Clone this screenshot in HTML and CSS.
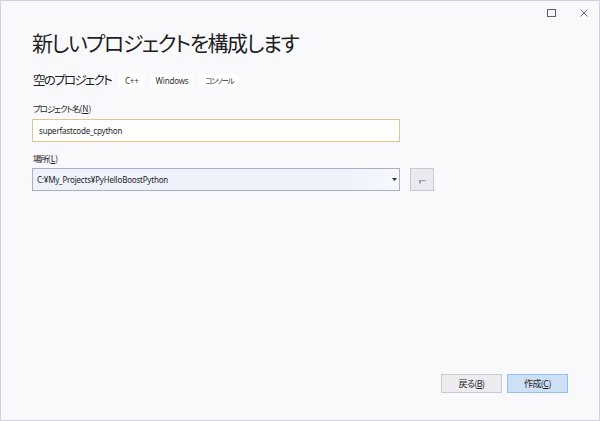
FILE: index.html
```html
<!DOCTYPE html>
<html lang="ja">
<head>
<meta charset="utf-8">
<title>新しいプロジェクトを構成します</title>
<link rel="stylesheet" href="styles.css">
</head>
<body>
<div class="window">
  <div class="titlebar">
    <span class="ctl max" aria-label="最大化"><svg width="9" height="8" viewBox="0 0 9 8"><rect x="0.5" y="0.5" width="8" height="7" fill="none" stroke="#5f5f6a" stroke-width="1"/></svg></span>
    <span class="ctl close" aria-label="閉じる"><svg width="8" height="8" viewBox="0 0 8 8"><path d="M0.5 0.5 L7.5 7.5 M7.5 0.5 L0.5 7.5" stroke="#6a6a75" stroke-width="1"/></svg></span>
  </div>
  <div class="content">
    <h1 class="title">新しいプロジェクトを構成します</h1>
    <div class="template">
      <span class="tname">空のプロジェクト</span>
      <span class="tag">C++</span>
      <span class="tag">Windows</span>
      <span class="tag jp">コンソール</span>
    </div>
    <label class="label first"><span class="jp">プロジェクト名</span>(<u>N</u>)</label>
    <div class="input name">superfastcode_cpython</div>
    <label class="label"><span class="jp">場所</span>(<u>L</u>)</label>
    <div class="locrow">
      <div class="input combo"><span class="ctext">C:¥My_Projects¥PyHelloBoostPython</span><span class="arrow"><svg width="5" height="3" viewBox="0 0 5 3"><path d="M0 0 H5 L2.5 3 Z" fill="#333"/></svg></span></div>
      <div class="browse"><svg width="7" height="4" viewBox="0 0 7 4"><path d="M0 0.6 H7" stroke="#9aa0b8" stroke-width="1.2"/><rect x="0" y="0" width="2" height="3.5" fill="#9aa0b8"/></svg></div>
    </div>
  </div>
  <div class="footer">
    <button class="btn">戻る(<u>B</u>)</button>
    <button class="btn primary">作成(<u>C</u>)</button>
  </div>
</div>
</body>
</html>
```
FILE: styles.css
```css
html, body {
  margin: 0;
  padding: 0;
}
body {
  font-family: "Noto Sans CJK JP", "Noto Sans", sans-serif;
  font-feature-settings: "palt";
  color: #1e1e1e;
}
.window {
  width: 600px;
  height: 421px;
  box-sizing: border-box;
  border: 1px solid #cfd0e3;
  background: #f9f9fb;
  display: flex;
  flex-direction: column;
}
.titlebar {
  display: flex;
  justify-content: flex-end;
  align-items: flex-start;
  height: 26px;
  padding-top: 8px;
  box-sizing: border-box;
}
.ctl {
  display: flex;
  align-items: center;
  justify-content: center;
}
.ctl.max {
  margin-right: 24px;
}
.ctl.close {
  margin-right: 11px;
}
.content {
  flex: 1;
  display: flex;
  flex-direction: column;
  padding-left: 31px;
}
.title {
  margin: 0;
  font-size: 21px;
  font-weight: 400;
  line-height: 30px;
  letter-spacing: -1.5px;
}
.template {
  display: flex;
  align-items: center;
  margin-top: 14px;
  height: 18px;
}
.tname {
  font-size: 12.5px;
  line-height: 18px;
  letter-spacing: -1.7px;
  margin-right: 8px;
  margin-left: 1px;
}
.tag {
  font-size: 8px;
  font-family: "Noto Sans", "Noto Sans CJK JP", sans-serif;
  letter-spacing: -0.2px;
  background: #ffffff;
  border-radius: 3px;
  padding: 0 6px;
  height: 13px;
  line-height: 13px;
  margin-right: 5px;
  color: #333;
}
.tag.jp {
  font-family: "Noto Sans CJK JP", sans-serif;
  font-size: 7.5px;
  letter-spacing: -1.3px;
}
.label {
  font-size: 8.5px;
  line-height: 12px;
  margin-top: 10px;
  margin-left: 1px;
}
.label .jp {
  letter-spacing: -1.1px;
}
.label.first {
  margin-top: 13px;
}
.label u {
  text-decoration-thickness: 1px;
}
.input {
  width: 368px;
  height: 23px;
  box-sizing: border-box;
  margin-top: 5px;
  font-family: "Noto Sans", "Noto Sans CJK JP", sans-serif;
  font-size: 8px;
  letter-spacing: -0.2px;
  display: flex;
  align-items: center;
}
.name {
  border: 1px solid #dcc593;
  background: #ffffff;
  padding-left: 6px;
}
.locrow {
  display: flex;
  align-items: flex-start;
  margin-top: 4px;
}
.combo {
  margin-top: 0;
  border: 1px solid #a9b0c6;
  background: linear-gradient(to right, #eef2fb 0%, #eef2fb 85%, #f6f8fd 100%);
  padding-left: 4px;
  justify-content: space-between;
}
.arrow {
  display: flex;
  width: 10px;
  height: 21px;
  align-items: center;
  justify-content: center;
}
.browse {
  margin-left: 10px;
  width: 24px;
  height: 23px;
  box-sizing: border-box;
  border: 1px solid #c9c9d2;
  background: #e9e9f0;
  display: flex;
  align-items: flex-end;
  justify-content: center;
  padding-bottom: 6px;
}
.footer {
  display: flex;
  justify-content: flex-end;
  gap: 5px;
  padding-right: 31px;
  padding-bottom: 27px;
}
.btn {
  width: 61px;
  height: 19px;
  box-sizing: border-box;
  font-family: "Noto Sans CJK JP", sans-serif;
  font-feature-settings: "palt";
  font-size: 9px;
  letter-spacing: -0.6px;
  color: #1e1e1e;
  border: 1px solid #c8c8cd;
  background: #ececf0;
  padding: 0;
  margin: 0;
}
.btn.primary {
  background: #cde0f5;
  border-color: #93c1f0;
}
```
